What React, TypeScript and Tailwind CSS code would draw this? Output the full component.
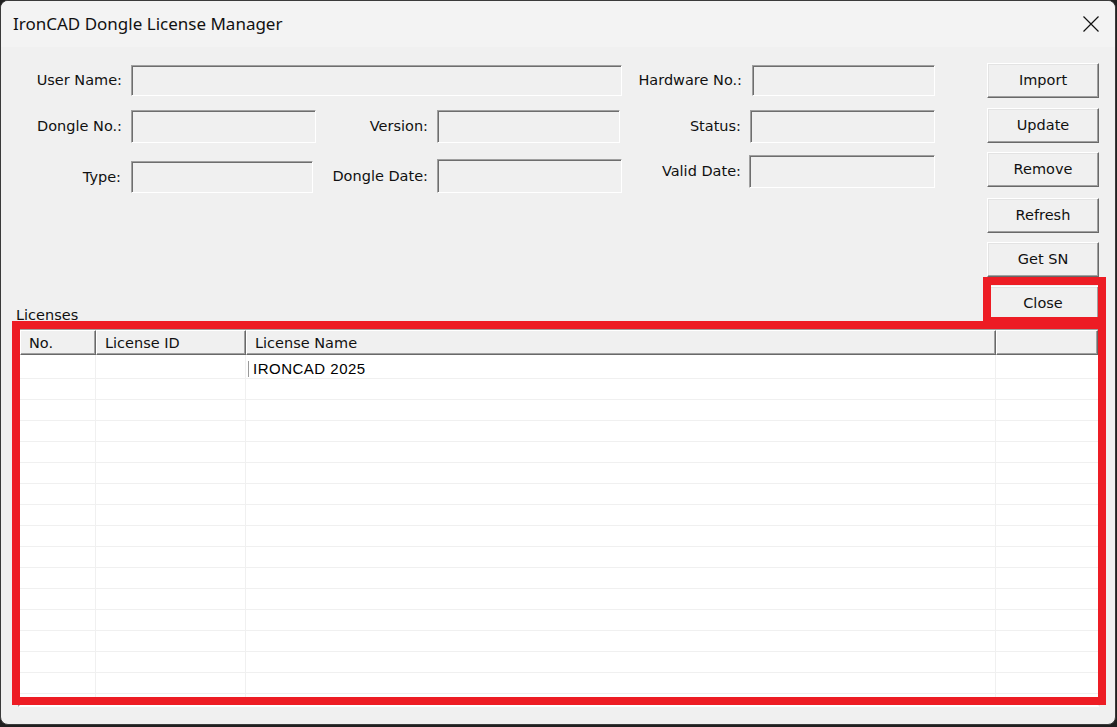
import React from "react";

const ui = "font-['DejaVu_Sans',sans-serif] text-[14.5px] text-[#111] leading-[17px]";

const tb =
  "bg-[#f0f0f0] border border-t-[#a0a0a0] border-l-[#a0a0a0] border-b-white border-r-white shadow-[inset_1px_1px_0_#6e6e6e]";

const btn =
  "w-[112px] flex items-center justify-center bg-[#f0f0f0] border border-t-white border-l-white border-b-[#696969] border-r-[#696969] shadow-[inset_-1px_-1px_0_#a0a0a0,inset_1px_1px_0_#e3e3e3]";

const hdr =
  "h-full flex items-center pl-[8px] pt-[2px] bg-[#f0f0f0] border border-t-white border-l-white border-b-[#696969] border-r-[#696969] shadow-[inset_-1px_-1px_0_#a0a0a0]";

function Field({
  label,
  lw,
  box,
  className,
}: {
  label: string;
  lw: string;
  box: string;
  className?: string;
}) {
  return (
    <div className={`flex items-center ${className ?? ""}`}>
      <div className={`${lw} text-right shrink-0`}>{label}</div>
      <div className={`${box} ${tb} shrink-0`} />
    </div>
  );
}

export default function App() {
  const rows = Array.from({ length: 17 });
  return (
    <div className="relative w-[1117px] h-[727px] bg-[#202020] overflow-hidden">
      <div className={`w-[1116px] h-[725px] rounded-[8px] border border-[#3a3a3a] bg-[#f0f0f0] overflow-hidden flex flex-col ${ui}`}>
        {/* Title bar */}
        <div className="h-[46px] shrink-0 bg-[#f3f3f3] flex items-center justify-between pl-[12px] pr-[16px]">
          <span className="font-['Noto_Sans',sans-serif] text-[17px] text-[#111] leading-[22px]">
            IronCAD Dongle License Manager
          </span>
          <svg width="16" height="16" viewBox="0 0 16 16" className="shrink-0">
            <path d="M0.5 0.5 L15.5 15.5 M15.5 0.5 L0.5 15.5" stroke="#111" strokeWidth="1.2" fill="none" />
          </svg>
        </div>

        {/* Top section */}
        <div className="flex pt-[16px] pr-[16px] shrink-0">
          <div className="flex-1 flex flex-col">
            <div className="mt-[2px] flex flex-col">
              {/* Row 1 */}
              <div className="flex items-center">
                <Field label="User Name:" lw="w-[130px] pr-[9px]" box="w-[491px] h-[31px]" />
                <Field label="Hardware No.:" lw="w-[130px] pr-[10px]" box="w-[183px] h-[31px]" />
              </div>
              {/* Row 2 */}
              <div className="flex items-center mt-[14px]">
                <Field label="Dongle No.:" lw="w-[130px] pr-[9px]" box="w-[185px] h-[33px]" />
                <Field label="Version:" lw="w-[121px] pr-[9px]" box="w-[183px] h-[33px]" />
                <Field label="Status:" lw="w-[130px] pr-[9px]" box="w-[185px] h-[33px]" />
              </div>
              {/* Row 3 */}
              <div className="flex items-start mt-[12px]">
                <Field label="Type:" lw="w-[130px] pr-[10px]" box="w-[182px] h-[32px]" className="mt-[6px]" />
                <Field label="Dongle Date:" lw="w-[124px] pr-[9px]" box="w-[185px] h-[34px]" className="mt-[4px]" />
                <Field label="Valid Date:" lw="w-[127px] pr-[8px]" box="w-[186px] h-[33px]" />
              </div>
            </div>
            <div className="mt-auto mb-[-4px] pl-[15px]">Licenses</div>
          </div>

          <div className="w-[112px] shrink-0 flex flex-col">
            <div className={`${btn} h-[35px]`}>Import</div>
            <div className={`${btn} h-[35px] mt-[10px]`}>Update</div>
            <div className={`${btn} h-[35px] mt-[9px]`}>Remove</div>
            <div className={`${btn} h-[35px] mt-[11px]`}>Refresh</div>
            <div className={`${btn} h-[35px] mt-[9px]`}>Get SN</div>
            <div className={`${btn} h-[34px] mt-[9px]`}>Close</div>
          </div>
        </div>

        {/* License list */}
        <div className="mt-[8px] ml-[17px] mr-[15px] h-[379px] shrink-0 bg-white border-2 border-t-[#a0a0a0] border-l-[#a0a0a0] border-b-white border-r-[#e3e3e3] overflow-hidden flex flex-col">
          <div className="h-[25px] shrink-0 flex">
            <div className={`${hdr} w-[76px]`}>No.</div>
            <div className={`${hdr} w-[150px]`}>License ID</div>
            <div className={`${hdr} w-[750px]`}>License Name</div>
            <div className={`${hdr} flex-1`} />
          </div>
          <div className="flex flex-col">
            {rows.map((_, i) => (
              <div
                key={i}
                className={`flex shrink-0 border-b border-[#f0f0f0] ${i === 0 ? "h-[24px]" : "h-[21px]"}`}
              >
                <div className="w-[76px] border-r border-[#f0f0f0]" />
                <div className="w-[150px] border-r border-[#f0f0f0]" />
                <div className="w-[750px] border-r border-[#f0f0f0] flex items-end">
                  {i === 0 && (
                    <div className="flex items-center pl-[2px]">
                      <div className="w-[1px] h-[16px] bg-[#9a9a9a]" />
                      <span className="ml-[4px] font-['Liberation_Sans',sans-serif] text-[15px] leading-[18px] tracking-[0.5px] text-black">
                        IRONCAD 2025
                      </span>
                    </div>
                  )}
                </div>
                <div className="flex-1" />
              </div>
            ))}
          </div>
        </div>
      </div>

      {/* Red annotation overlays */}
      <div className="absolute left-[983px] top-[277px] w-[123px] h-[48px] border-[8px] border-[#ed1c24] pointer-events-none" />
      <div className="absolute left-[12px] top-[321px] w-[1094px] h-[384px] border-[8px] border-[#ed1c24] pointer-events-none" />
    </div>
  );
}
